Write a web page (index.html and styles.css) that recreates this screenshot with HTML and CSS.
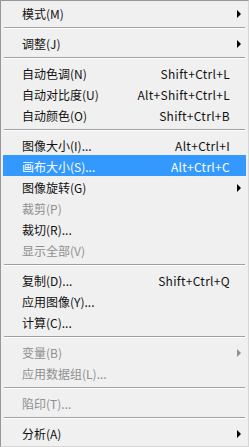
FILE: index.html
```html
<!DOCTYPE html>
<html lang="zh-CN">

<head>
  <meta charset="UTF-8">
  <meta name="viewport" content="width=device-width, initial-scale=1.0">
  <title>图像菜单</title>
  <link rel="stylesheet" href="styles.css">
</head>

<body>
  <div class="menu">
    <div class="item"><span class="label">模式(M)</span><span class="sub"><i></i></span></div>
    <div class="sep"></div>
    <div class="item"><span class="label">调整(J)</span><span class="sub"><i></i></span></div>
    <div class="sep"></div>
    <div class="item"><span class="label">自动色调(N)</span><span class="key">Shift+Ctrl+L</span><span class="sub"></span></div>
    <div class="item"><span class="label">自动对比度(U)</span><span class="key">Alt+Shift+Ctrl+L</span><span class="sub"></span></div>
    <div class="item"><span class="label">自动颜色(O)</span><span class="key">Shift+Ctrl+B</span><span class="sub"></span></div>
    <div class="sep"></div>
    <div class="item"><span class="label">图像大小(I)...</span><span class="key">Alt+Ctrl+I</span><span class="sub"></span></div>
    <div class="item active"><span class="label">画布大小(S)...</span><span class="key">Alt+Ctrl+C</span><span class="sub"></span></div>
    <div class="item"><span class="label">图像旋转(G)</span><span class="sub"><i></i></span></div>
    <div class="item disabled"><span class="label">裁剪(P)</span><span class="sub"></span></div>
    <div class="item"><span class="label">裁切(R)...</span><span class="sub"></span></div>
    <div class="item disabled"><span class="label">显示全部(V)</span><span class="sub"></span></div>
    <div class="sep"></div>
    <div class="item"><span class="label">复制(D)...</span><span class="key">Shift+Ctrl+Q</span><span class="sub"></span></div>
    <div class="item"><span class="label">应用图像(Y)...</span><span class="sub"></span></div>
    <div class="item"><span class="label">计算(C)...</span><span class="sub"></span></div>
    <div class="sep"></div>
    <div class="item disabled"><span class="label">变量(B)</span><span class="sub"><i></i></span></div>
    <div class="item disabled"><span class="label">应用数据组(L)...</span><span class="sub"></span></div>
    <div class="sep"></div>
    <div class="item disabled"><span class="label">陷印(T)...</span><span class="sub"></span></div>
    <div class="sep"></div>
    <div class="item"><span class="label">分析(A)</span><span class="sub"><i></i></span></div>
  </div>
</body>

</html>
```

FILE: styles.css
```css
body {
  margin: 0;
  background: #f0f0f0;
}

.menu {
  box-sizing: border-box;
  width: 249px;
  height: 447px;
  padding: 1px 2px 2px 2px;
  background: #f0f0f0;
  border: 1px solid #979797;
  border-right-color: #d6d6d6;
  border-bottom-color: #d6d6d6;
  font-family: "Noto Sans CJK SC", "Noto Sans", sans-serif;
  font-size: 12px;
  color: #111;
}

.item {
  display: flex;
  align-items: center;
  height: 21px;
  padding: 2px 0 0 19px;
  box-sizing: border-box;
  line-height: 19px;
}

.label {
  flex: 1;
  white-space: nowrap;
}

.key {
  white-space: nowrap;
  letter-spacing: 0.3px;
}

.sub {
  width: 16px;
  height: 19px;
  display: flex;
  align-items: center;
  justify-content: center;
}

.sub i {
  width: 0;
  height: 0;
  margin-left: 2px;
  border-left: 4px solid #000;
  border-top: 4px solid transparent;
  border-bottom: 4px solid transparent;
}

.active {
  background: #3399ff;
  color: #fff;
}

.disabled {
  color: #8f8f8f;
}

.disabled .sub i {
  border-left-color: #8f8f8f;
}

.sep {
  height: 1px;
  margin: 4px 1px 3px 1px;
  background: #a0a0a0;
  border-bottom: 1px solid #fff;
}
```
